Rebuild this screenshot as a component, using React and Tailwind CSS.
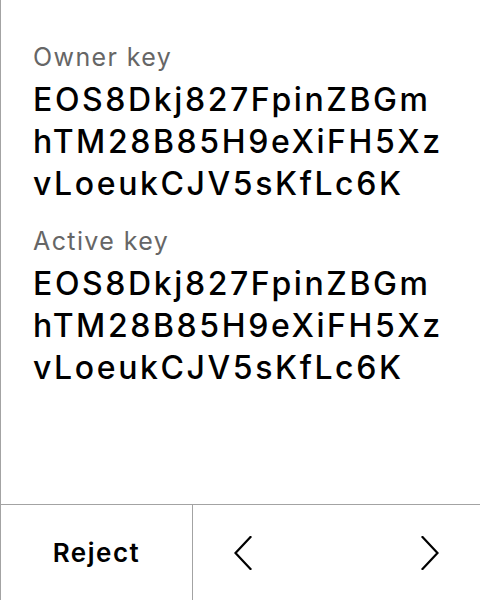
const KEY = ['EOS8Dkj827FpinZBGm', 'hTM28B85H9eXiFH5Xz', 'vLoeukCJV5sKfLc6K']

function Chevron({ dir }) {
  const points = dir === 'left' ? '16.5,1 1.5,17 16.5,33' : '1.5,1 16.5,17 1.5,33'
  return (
    <svg width="18" height="34" viewBox="0 0 18 34" fill="none" className="text-black">
      <polyline points={points} stroke="currentColor" strokeWidth="2.2" strokeLinecap="square" strokeLinejoin="miter" />
    </svg>
  )
}

function KeyBlock({ label }) {
  return (
    <div>
      <p className="text-[25px] leading-[32px] tracking-[1.4px] text-[#666666]">{label}</p>
      <div className="mt-[6px] text-[32px] font-medium leading-[42px] tracking-[2.6px] text-black">
        {KEY.map((line) => (
          <div key={line}>{line}</div>
        ))}
      </div>
    </div>
  )
}

export default function App() {
  return (
    <div
      className="flex h-[600px] w-[480px] flex-col border-l border-[#a3a3a3] bg-white"
      style={{ fontFamily: 'Inter, "Noto Sans", sans-serif' }}
    >
      <div className="flex flex-1 flex-col gap-[20px] px-[32px] pt-[41px]">
        <KeyBlock label="Owner key" />
        <KeyBlock label="Active key" />
      </div>
      <div className="flex h-[96px] border-t border-[#a3a3a3]">
        <button className="flex w-[192px] items-center justify-center border-r border-[#a3a3a3] text-[26px] font-semibold tracking-[1.5px] text-black">
          Reject
        </button>
        <div className="flex flex-1 items-center justify-between pl-[41px] pr-[41px]">
          <Chevron dir="left" />
          <Chevron dir="right" />
        </div>
      </div>
    </div>
  )
}
